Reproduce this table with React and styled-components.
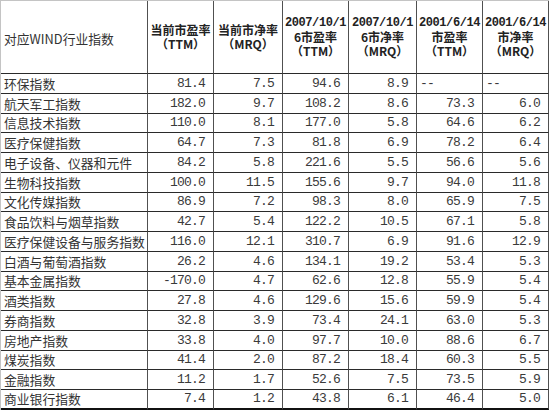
import React from 'react';
import styled, { createGlobalStyle } from 'styled-components';

const GlobalStyle = createGlobalStyle`
  html, body { margin: 0; padding: 0; background: #ffffff; }
  body { font-family: "Noto Sans CJK SC", "Noto Sans", sans-serif; }
`;

const rows = [
  ['环保指数', '81.4', '7.5', '94.6', '8.9', '--', '--'],
  ['航天军工指数', '182.0', '9.7', '108.2', '8.6', '73.3', '6.0'],
  ['信息技术指数', '110.0', '8.1', '177.0', '5.8', '64.6', '6.2'],
  ['医疗保健指数', '64.7', '7.3', '81.8', '6.9', '78.2', '6.4'],
  ['电子设备、仪器和元件', '84.2', '5.8', '221.6', '5.5', '56.6', '5.6'],
  ['生物科技指数', '100.0', '11.5', '155.6', '9.7', '94.0', '11.8'],
  ['文化传媒指数', '86.9', '7.2', '98.3', '8.0', '65.9', '7.5'],
  ['食品饮料与烟草指数', '42.7', '5.4', '122.2', '10.5', '67.1', '5.8'],
  ['医疗保健设备与服务指数', '116.0', '12.1', '310.7', '6.9', '91.6', '12.9'],
  ['白酒与葡萄酒指数', '26.2', '4.6', '134.1', '19.2', '53.4', '5.3'],
  ['基本金属指数', '-170.0', '4.7', '62.6', '12.8', '55.9', '5.4'],
  ['酒类指数', '27.8', '4.6', '129.6', '15.6', '59.9', '5.4'],
  ['券商指数', '32.8', '3.9', '73.4', '24.1', '63.0', '5.3'],
  ['房地产指数', '33.8', '4.0', '97.7', '10.0', '88.6', '6.7'],
  ['煤炭指数', '41.4', '2.0', '87.2', '18.4', '60.3', '5.5'],
  ['金融指数', '11.2', '1.7', '52.6', '7.5', '73.5', '5.9'],
  ['商业银行指数', '7.4', '1.2', '43.8', '6.1', '46.4', '5.0'],
];

// 헤더는 원본처럼 줄을 직접 나눔
const headers = [
  ['当前市盈率', '（TTM）'],
  ['当前市净率', '（MRQ）'],
  ['2007/10/1', '6市盈率', '（TTM）'],
  ['2007/10/1', '6市净率', '（MRQ）'],
  ['2001/6/14', '市盈率', '（TTM）'],
  ['2001/6/14', '市净率', '（MRQ）'],
];

const Sheet = styled.div`
  display: grid;
  grid-template-columns: 147px 66px 69px 66px 68px 66px 66px;
  grid-template-rows: 73px repeat(17, 19.76px);
  width: 549px;
  border-top: 1px solid #c4c4c4;
  border-left: 1px solid #c4c4c4;
  box-sizing: border-box;
  color: #333;
`;

const Cell = styled.div`
  box-sizing: border-box;
  border-right: 1px solid #505050;
  border-bottom: ${p => (p.$last ? '2px solid #111' : '1px solid #2a2a2a')};
  display: flex;
  align-items: center;
  overflow: hidden;
  white-space: nowrap;
`;

const LabelCell = styled(Cell)`
  padding-left: 3px;
  font-size: 12.8px;
  color: #333;
`;

const NumCell = styled(Cell)`
  justify-content: ${p => (p.$dash ? 'flex-start' : 'flex-end')};
  padding: ${p => (p.$dash ? '0 0 0 3px' : '0 8px 0 0')};
  font-family: "Liberation Mono", monospace;
  font-size: 13px;
  letter-spacing: -0.8px;
  color: #3a3a3a;
`;

const HeadCell = styled(Cell)`
  flex-direction: column;
  justify-content: center;
  text-align: center;
`;

const HeadLine = styled.div`
  font-weight: bold;
  font-size: 12px;
  line-height: 14px;
  height: 14px;
  color: #222;
  font-family: ${p => (p.$mono ? '"Liberation Mono", monospace' : '"Noto Sans CJK SC", sans-serif')};
  letter-spacing: ${p => (p.$mono ? '-0.4px' : '0')};
`;

const TitleCell = styled(Cell)`
  padding: 2px 0 0 3px;
  font-size: 12.8px;
  color: #333;
`;

export default function App() {
  return (
    <>
      <GlobalStyle />
      <Sheet>
        <TitleCell>对应WIND行业指数</TitleCell>
        {headers.map((lines, i) => (
          <HeadCell key={i}>
            {lines.map((l, j) => (
              <HeadLine key={j} $mono={/^\d+\//.test(l)}>{l}</HeadLine>
            ))}
          </HeadCell>
        ))}
        {rows.map((r, ri) => {
          const last = ri === rows.length - 1;
          return (
            <React.Fragment key={ri}>
              <LabelCell $last={last}>{r[0]}</LabelCell>
              {r.slice(1).map((v, ci) => (
                <NumCell key={ci} $last={last} $dash={v === '--'}>{v}</NumCell>
              ))}
            </React.Fragment>
          );
        })}
      </Sheet>
    </>
  );
}
